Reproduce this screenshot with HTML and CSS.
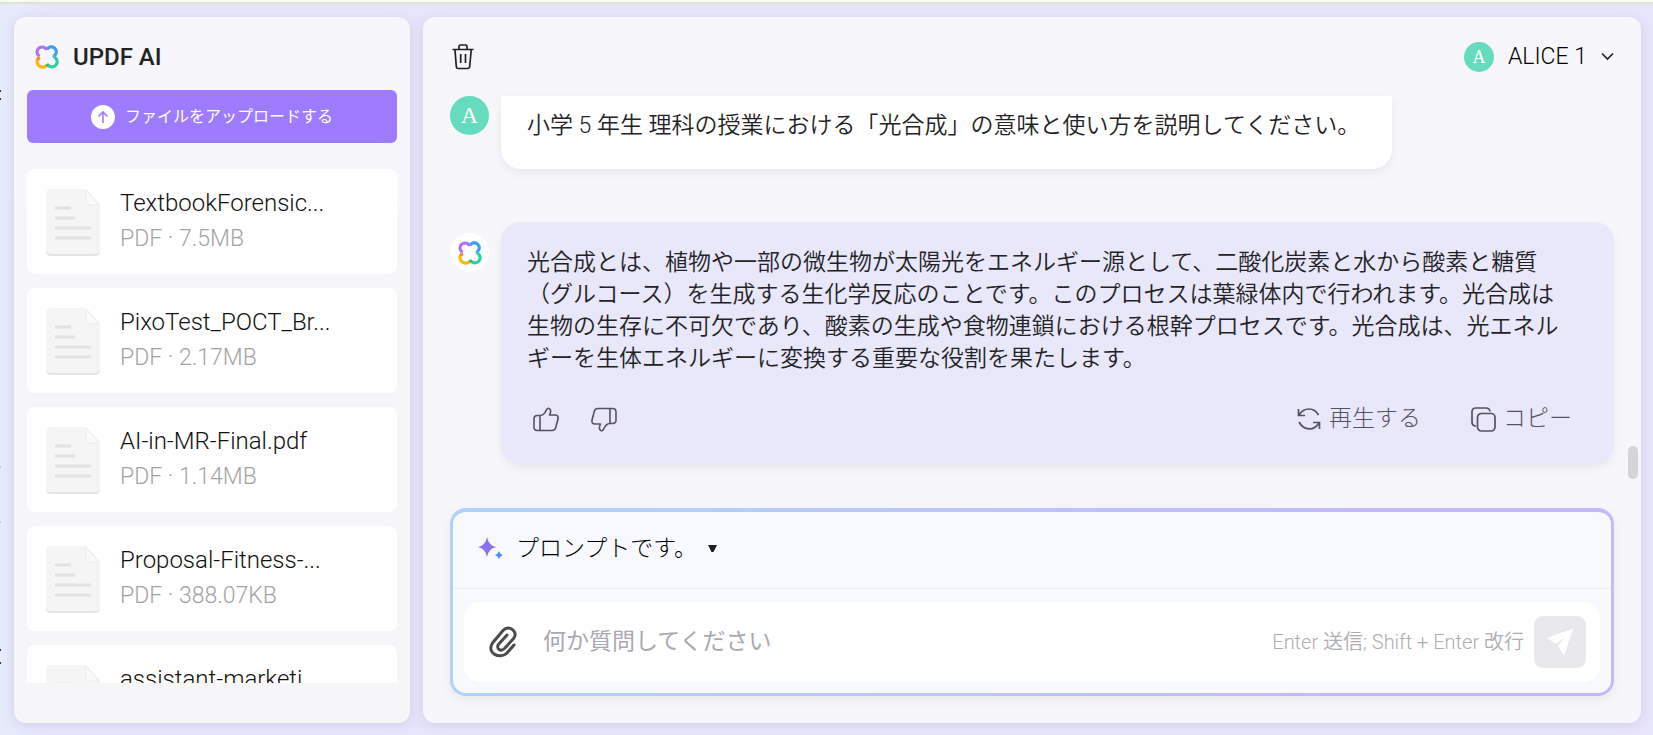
FILE: index.html
```html
<!DOCTYPE html>
<html lang="ja">
<head>
<meta charset="utf-8">
<meta name="viewport" content="width=device-width, initial-scale=1">
<title>UPDF AI</title>
<link rel="stylesheet" href="styles.css">
</head>
<body>
<svg class="defs" aria-hidden="true">
  <symbol id="clover" viewBox="0 0 24 24">
    <g fill="none" stroke-width="3.2">
      <path stroke="#3b9ff0" d="M12 4.6C13.4 1.6 17 1 19.4 2.9C22 5 21.900 8.600 19.600 10.400"/>
      <path stroke="#b072ee" d="M4.500 11.500C1.300 9.200 1.200 5.200 3.700 3.200C6.200 1.200 9.600 1.800 12 4.600"/>
      <path stroke="#2bd0a0" d="M19.400 12C22.400 14 23 17.300 20.900 20C18.700 22.600 14.800 22.300 12.400 19.600"/>
      <path stroke="#4cb5d8" d="M19.600 10.200Q18.600 11.100 19.600 12.200"/>
      <path stroke="#fbb714" d="M12.600 19.600C10 22.600 6.400 23 3.700 20.600C1.200 18 1.400 15 4.500 12.200"/>
      <path stroke="#f08a50" d="M4.600 12.200Q3.300 13.100 2.600 14.700"/>
      <path stroke="#38b976" d="M11.600 19.200Q12.500 20.200 13.500 20.600"/>
    </g>
  </symbol>
  <symbol id="doc" viewBox="0 0 56 67">
    <path fill="#e4e4e4" d="M5 2H42L55 17V62Q55 67 50 67H6Q1 67 1 62V6Q1 2 5 2Z"/>
    <path fill="#f5f5f5" d="M5 0H41L55 15V60Q55 65 50 65H6Q1 65 1 60V5Q1 0 6 0Z"/>
    <path fill="#fafafa" stroke="#ececec" d="M41 1V12Q41 16 45 16H54Z"/>
    <path stroke="#e2e2e2" stroke-width="3" d="M10 19H26M10 29H30M10 39H46M10 49H46"/>
  </symbol>
  <symbol id="thumb" viewBox="0 0 26 25">
    <path fill="none" stroke="#55525f" stroke-width="1.600" stroke-linejoin="round" d="M7 8.500H4.500Q1 8.500 1 12V20Q1 23.500 4.500 23.500H19Q21.800 23.500 22.600 21L25 12Q25.600 8 22 8H16.500Q18.300 4.500 17.200 2.500Q15.500 0 13.600 2.500C12.300 5.500 10.500 8.500 7 8.500V23.500"/>
  </symbol>
</svg>
<div class="topline"></div>
<div class="page">
  <aside class="panel sidebar">
    <h1 class="brand"><svg class="clover"><use href="#clover"/></svg>UPDF AI</h1>
    <button class="upload" type="button">
      <svg viewBox="0 0 24 24"><circle cx="12" cy="12" r="12" fill="#fff"/><path d="M12 18V7M7.500 11.500L12 7L16.500 11.500" fill="none" stroke="#9f7cff" stroke-width="1.600"/></svg>
      ファイルをアップロードする
    </button>
    <ul class="files">
      <li class="file"><svg><use href="#doc"/></svg><div><p class="name">TextbookForensic...</p><p class="meta">PDF · 7.5MB</p></div></li>
      <li class="file"><svg><use href="#doc"/></svg><div><p class="name">PixoTest_POCT_Br...</p><p class="meta">PDF · 2.17MB</p></div></li>
      <li class="file"><svg><use href="#doc"/></svg><div><p class="name">AI-in-MR-Final.pdf</p><p class="meta">PDF · 1.14MB</p></div></li>
      <li class="file"><svg><use href="#doc"/></svg><div><p class="name">Proposal-Fitness-...</p><p class="meta">PDF · 388.07KB</p></div></li>
      <li class="file"><svg><use href="#doc"/></svg><div><p class="name">assistant-marketi</p></div></li>
    </ul>
  </aside>
  <main class="panel chat">
    <header class="bar">
      <button class="plain" type="button" aria-label="Delete">
        <svg width="22" height="26" viewBox="0 0 22 26" fill="none" stroke="#222" stroke-width="1.700"><path d="M.5 5.500H21.500M7 5V2.500Q7 1 8.500 1H13.500Q15 1 15 2.500V5M3 6L4.300 22.500Q4.500 24.500 6.500 24.500H15.500Q17.500 24.500 17.700 22.500L19.200 6M8.700 10V19M13.500 10V19"/></svg>
      </button>
      <button class="plain account" type="button"><span class="avatar small">A</span>ALICE 1
        <svg width="13" height="9" viewBox="0 0 13 9" fill="none" stroke="#222" stroke-width="1.700"><path d="M1 1.500L6.500 7L12 1.500"/></svg>
      </button>
    </header>
    <section class="row">
      <span class="avatar">A</span>
      <p class="bubble question">小学 5 年生 理科の授業における「光合成」の意味と使い方を説明してください。</p>
    </section>
    <section class="row reply">
      <span class="avatar bot"><svg class="clover"><use href="#clover"/></svg></span>
      <div class="bubble answer">
        <p>光合成とは、植物や一部の微生物が太陽光をエネルギー源として、二酸化炭素と水から酸素と糖質<br>（グルコース）を生成する生化学反応のことです。このプロセスは葉緑体内で行われます。光合成は<br>生物の生存に不可欠であり、酸素の生成や食物連鎖における根幹プロセスです。光合成は、光エネル<br>ギーを生体エネルギーに変換する重要な役割を果たします。</p>
        <div class="actions">
          <button class="plain" type="button" aria-label="Good"><svg width="26" height="25"><use href="#thumb"/></svg></button>
          <button class="plain down" type="button" aria-label="Bad"><svg width="26" height="25" viewBox="0 0 26 25"><g transform="rotate(180 13 12.500)"><use href="#thumb" width="26" height="25"/></g></svg></button>
          <button class="plain again" type="button"><svg width="24" height="24" viewBox="0 0 24 24" fill="none" stroke="#55525f" stroke-width="1.700"><path d="M1.500 2V8.500H8M2 8C7 0 17 0 21.500 8M22.500 22V15.500H16M22 16C17 24 7 24 2 15"/></svg>再生する</button>
          <button class="plain copy" type="button"><svg width="25" height="25" viewBox="0 0 25 25" fill="none" stroke="#55525f" stroke-width="1.700"><rect x="6.500" y="6.500" width="17.500" height="17.500" rx="4"/><path d="M5 19H4Q1 18.500 1 15V5Q1 1 5 1H15Q18.500 1 19 4.500"/></svg>コピー</button>
        </div>
      </div>
    </section>
    <form class="composer">
      <button class="plain prompt" type="button"><svg width="26" height="24" viewBox="0 0 26 24"><path fill="#8a72ee" d="M9 0Q10.500 8.500 18 10Q10.500 11.500 9 20Q7.500 11.500 0 10Q7.500 8.500 9 0Z"/><path fill="#3d8df0" d="M21 14Q21.800 17.200 25 18Q21.800 18.800 21 22Q20.200 18.800 17 18Q20.200 17.200 21 14Z"/></svg>プロンプトです。<svg class="caret" width="9" height="7" viewBox="0 0 9 7"><path d="M0 0H9L5.500 7H3.500Z" fill="#1c1c28"/></svg></button>
      <div class="entry">
        <button class="plain" type="button" aria-label="Attach"><svg width="28" height="32" viewBox="0 0 28 32" fill="none" stroke="#4b4b4d" stroke-width="3" stroke-linecap="round"><path d="M25 19L18 27C11 34-3 27 3.500 17L14 4.500C20-2 30 6 24.500 12.500L15.500 22.500C11 26.500 6.500 21.500 9.800 18L18 9"/></svg></button>
        <input type="text" aria-label="質問" placeholder="何か質問してください">
        <span class="hint">Enter 送信; Shift + Enter 改行</span>
        <button class="send" type="submit" aria-label="送信"><svg width="28" height="28" viewBox="0 0 28 28" fill="#fff"><path d="M27.500 .5L18 27.500L12 18L18.500 10L9.800 15.500L.5 10Z"/></svg></button>
      </div>
    </form>
    <div class="thumb-bar"></div>
  </main>
</div>
<svg class="edge" width="2" height="735" viewBox="0 0 2 735" aria-hidden="true"><path stroke="#33333c" stroke-width="2" d="M0 90V92M0 98V100M0 649V651M0 662V664"/><path stroke="#a9a9c0" d="M0 466V468M0 521V523"/></svg>
</body>
</html>
```
FILE: styles.css
```css
* { box-sizing: border-box; }
body, p, h1, ul { margin: 0; padding: 0; }
body {
  height: 100vh;
  display: flex;
  flex-direction: column;
  overflow: hidden;
  background: linear-gradient(90deg, #e6ecfc, #e8e6fb 3%, #e8e6fb);
  color: #232326;
  font: 350 23px/32px Roboto, "Noto Sans CJK JP", sans-serif;
}
button, input { font: inherit; color: inherit; }
.defs { position: absolute; width: 0; height: 0; }
.edge { position: absolute; left: 0; top: 0; }
.topline { height: 4px; background: #f8fceb; border-bottom: 2px solid #dfe3d5; flex: none; }
.page { flex: 1; min-height: 0; display: flex; gap: 13px; padding: 13px 12px 12px 14px; }
.panel { background: #f6f6fb; border-radius: 12px; box-shadow: 0 2px 12px #bcb8dc80; }
.sidebar { width: 396px; flex: none; display: flex; flex-direction: column; padding: 23px 13px 40px; background: linear-gradient(#f6f6fb 25%, #f6f6f8 45%); }
.brand { display: flex; align-items: center; gap: 14px; height: 34px; margin-left: 8px; font: 500 24px/32px Roboto, sans-serif; }
.clover { width: 24px; height: 24px; display: block; }
.upload { margin-top: 16px; height: 53px; flex: none; border: 0; border-radius: 6px; background: #9f7cff; color: #fff; display: flex; justify-content: center; align-items: center; gap: 10px; font-size: 16px; font-weight: 400; }
.upload svg { width: 24px; height: 24px; }
.files { list-style: none; margin-top: 26px; flex: 1; min-height: 0; overflow: hidden; display: flex; flex-direction: column; gap: 14px; }
.file { height: 105px; flex: none; display: flex; gap: 19px; padding: 16px 18px; background: #fff; border-radius: 8px; }
.file svg { width: 56px; height: 67px; margin-top: 4px; flex: none; }
.name, .meta { line-height: 36px; font-size: 24px; }
.name { font-weight: 300; color: #111; }
.meta { color: #a3a3a5; font-size: 23px; }
.chat { flex: 1; min-width: 0; position: relative; padding: 19px 27px 27px; display: flex; flex-direction: column; }
.plain { border: 0; background: none; padding: 0; display: flex; align-items: center; }
.plain svg { display: block; flex: none; }
.bar { height: 41px; display: flex; justify-content: space-between; align-items: center; padding-left: 2px; margin-bottom: 19px; }
.account { gap: 14px; color: #000; }
.avatar { width: 39px; height: 39px; flex: none; border-radius: 50%; background: #66dbbd; color: #fff; display: flex; justify-content: center; align-items: center; font: 24px/39px "Liberation Serif", serif; }
.avatar.small { width: 30px; height: 30px; font-size: 18px; line-height: 30px; }
.row { display: flex; gap: 12px; align-items: flex-start; }
.bubble { box-shadow: 0 4px 10px #00000010; }
.question { padding: 14px 32px 27px 26px; background: #fff; border-radius: 0 0 20px 20px; }
.reply { margin-top: 53px; }
.bot { background: #fff; margin-top: 11px; }
.answer { flex: 1; padding: 25px 42px 29px 26px; background: #e9e7fa; border-radius: 20px; }
.actions { display: flex; align-items: center; margin-top: 28px; padding-left: 6px; height: 32px; color: #55525f; font-weight: 300; }
.down { margin-left: 32px; }
.again { margin-left: auto; gap: 8px; }
.copy { margin-left: 50px; gap: 7px; }
.composer { margin-top: auto; border: 3px solid transparent; border-top-width: 4px; border-radius: 16px; background: linear-gradient(#f8f8ff, #f8f8ff) padding-box, linear-gradient(90deg, #aed3fa, #b9c8f5 35%, #c3baf9 80%, #c3baf9) border-box; box-shadow: 0 4px 12px #00000010; }
.prompt { width: 100%; height: 77px; padding: 0 0 3px 25px; gap: 12px; border-bottom: 1px solid #ececf3; font-weight: 300; color: #000; }
.caret { margin-left: -1px; }
.entry { margin: 13px 11px 11px; height: 80px; border-radius: 16px; background: #fff; display: flex; align-items: center; padding: 0 14px 0 25px; }
.entry input { flex: 1; min-width: 0; border: 0; outline: 0; background: none; padding: 0 0 0 26px; font-weight: 400; }
.entry input::placeholder { color: #a9a9b0; opacity: 1; }
.hint { color: #adadb0; font-size: 20px; white-space: nowrap; }
.send { width: 52px; height: 52px; margin-left: 10px; border: 0; border-radius: 9px; background: #e9e8eb; display: flex; justify-content: center; align-items: center; padding: 0; }
.thumb-bar { position: absolute; right: 3px; top: 429px; width: 10px; height: 33px; border-radius: 5px; background: #d5d5d8; }
```
